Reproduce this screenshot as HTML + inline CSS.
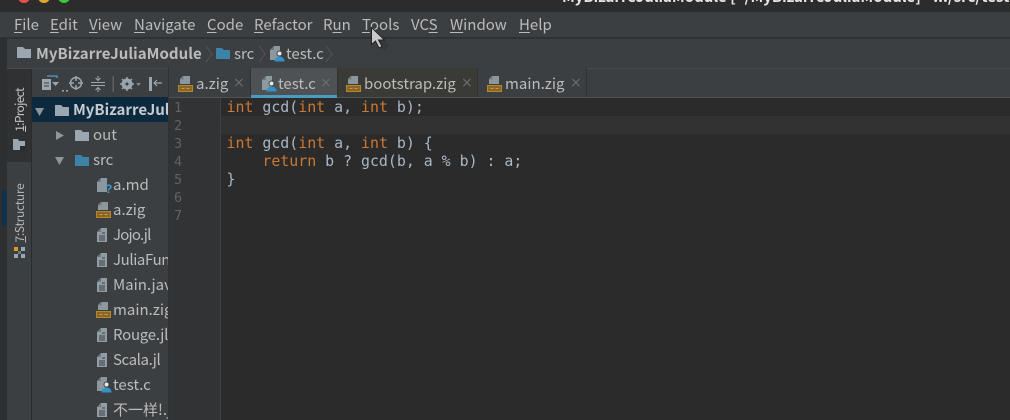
<!DOCTYPE html>
<html><head><meta charset="utf-8"><style>
html,body{margin:0;padding:0;background:#3c3f41}
#r{position:relative;width:1010px;height:420px;overflow:hidden;background:#3c3f41;font-family:"Noto Sans CJK SC","Liberation Sans",sans-serif;font-size:15px;color:#bbbbbb}
.a{position:absolute}
.t{position:absolute;white-space:pre;line-height:20px;height:20px}
.m u{text-decoration:underline;text-underline-offset:2px}
svg{position:absolute;overflow:visible}
.c{position:absolute;left:226.500px;white-space:pre;font:14.9px/18px "DejaVu Sans Mono","Liberation Mono",monospace;color:#a9b7c6}
.c b{font-weight:normal;color:#cc7832}
.n{position:absolute;left:174px;font:13.5px/18px "DejaVu Sans Mono",monospace;color:#606366}
.x{position:absolute;font:14px/20px "DejaVu Sans",sans-serif;color:#6a6d6f}
.tab{position:absolute;top:68px;height:29px}
</style></head><body><div id="r">
<svg width="0" height="0" style="position:absolute"><defs>
<g id="file"><path d="M4 0h6v14H0V4z" fill="#9aa7b0" opacity=".9"/><path d="M0 4l4-4v4z" fill="#6f787e"/><path d="M2 8h6M2 10h6M2 12h6M5 5h3" stroke="#3c3f41" stroke-width="1"/></g>
<g id="zig"><path d="M5 0H12V8H2V3z" fill="#9aa7b0" opacity=".85"/><path d="M2 3.500l3.500-3.500v3.500z" fill="#6f787e"/><rect x=".5" y="9.500" width="14" height="6" fill="#8a6823" stroke="#b5862e"/><path d="M3.500 12.500h3M8.500 12.500h3" stroke="#c39a45" stroke-width="1"/></g>
<g id="cf"><path d="M4 0h6v14H0V4z" fill="#9aa7b0" opacity=".85"/><path d="M0 4l4-4v4z" fill="#6f787e"/><circle cx="9.500" cy="7.500" r="2.500" fill="#e8e8e8" stroke="#3c3f41"/><path d="M4.500 15.500c0-3.500 2.500-5 5-5s5 1.500 5 5z" fill="#3592c4"/></g>
<path id="fold" d="M0 2h6l2 2h6v9H0z"/>
</defs></svg>

<!-- title bar -->
<div class="a" style="left:0;top:0;width:1010px;height:12px;background:#2c2c2c"></div>
<div class="a" style="left:18px;top:-9px;width:12px;height:12px;border-radius:50%;background:#e8504a"></div>
<div class="a" style="left:38px;top:-9px;width:12px;height:12px;border-radius:50%;background:#e3a52c"></div>
<div class="a" style="left:58px;top:-9px;width:12px;height:12px;border-radius:50%;background:#3fc63f"></div>
<div class="t" style="left:562px;top:-13px;font-weight:bold;font-size:15px;color:#e6e6e6">MyBizarreJuliaModule [~/MyBizarreJuliaModule] - .../src/test.c</div>

<!-- menu -->
<div class="a" style="left:0;top:37px;width:1010px;height:2px;background:#2f3133"></div>
<div class="t m" style="left:14px;top:15px"><u>F</u>ile</div>
<div class="t m" style="left:50px;top:15px"><u>E</u>dit</div>
<div class="t m" style="left:89px;top:15px"><u>V</u>iew</div>
<div class="t m" style="left:134px;top:15px"><u>N</u>avigate</div>
<div class="t m" style="left:207px;top:15px"><u>C</u>ode</div>
<div class="t m" style="left:254px;top:15px"><u>R</u>efactor</div>
<div class="t m" style="left:323px;top:15px">R<u>u</u>n</div>
<div class="t m" style="left:362px;top:15px"><u>T</u>ools</div>
<div class="t m" style="left:411px;top:15px">VC<u>S</u></div>
<div class="t m" style="left:450px;top:15px"><u>W</u>indow</div>
<div class="t m" style="left:519px;top:15px"><u>H</u>elp</div>

<!-- nav bar -->
<div class="a" style="left:0;top:68px;width:1010px;height:1px;background:#4a4a4a"></div>
<svg style="left:17px;top:45px" width="16" height="14"><use href="#fold" fill="#9aa7b0"/></svg>
<div class="t" style="left:36px;top:44px;font-weight:bold;letter-spacing:.05px">MyBizarreJuliaModule</div>
<svg style="left:205px;top:45px" width="8" height="18"><path d="M1 1l6 8-6 8" fill="none" stroke="#555"/></svg>
<svg style="left:216px;top:46px" width="16" height="14"><use href="#fold" fill="#3d83a8"/></svg>
<div class="t" style="left:234px;top:44px">src</div>
<svg style="left:258px;top:45px" width="8" height="18"><path d="M1 1l6 8-6 8" fill="none" stroke="#555"/></svg>
<svg style="left:270px;top:46px" width="16" height="16"><use href="#cf"/></svg>
<div class="t" style="left:286px;top:44px">test.c</div>
<svg style="left:325px;top:45px" width="8" height="18"><path d="M1 1l6 8-6 8" fill="none" stroke="#555"/></svg>

<!-- left strip -->
<div class="a" style="left:0;top:38px;width:7px;height:382px;background:#2d2f31"></div>
<div class="a" style="left:2px;top:190px;width:5px;height:36px;background:#123049"></div>
<div class="a" style="left:7px;top:69px;width:24px;height:351px;background:#3c3f41"></div>
<div class="a" style="left:7px;top:69px;width:24px;height:93px;background:#2f3133"></div>
<div class="a" style="left:31px;top:69px;width:1px;height:351px;background:#2b2b2b"></div>
<div class="t" style="left:-12px;top:100px;width:64px;text-align:center;transform:rotate(-90deg);font-size:12px;letter-spacing:-.7px;color:#c4c4c4"><u>1</u>:Project</div>
<svg style="left:13px;top:139px" width="12" height="12"><path d="M0 0h5l1 2h6v6H0z" fill="#9aa7b0"/><path d="M0 8h7v3H0z" fill="#9aa7b0"/><rect x="7" y="7" width="5" height="5" fill="#2b2b2b"/></svg>
<div class="t" style="left:-13px;top:203px;width:66px;text-align:center;transform:rotate(-90deg);font-size:12px;letter-spacing:-.3px;color:#b4b4b4"><u>7</u>:Structure</div>
<svg style="left:14px;top:247px" width="11" height="11"><rect x="0" y="0" width="4" height="4" fill="#e0972a"/><rect x="7" y="0" width="4" height="4" fill="#9aa7b0"/><rect x="0" y="7" width="4" height="4" fill="#9aa7b0"/><rect x="7" y="7" width="4" height="4" fill="#9aa7b0"/><rect x="4" y="4" width="3" height="3" fill="#6f7a80"/></svg>

<!-- project panel toolbar -->
<svg style="left:41px;top:75px" width="130" height="18">
<rect x="1" y="4" width="9" height="11" fill="#9aa7b0"/><path d="M3 8h5M3 11h5" stroke="#3c3f41"/><path d="M6 1h10v2" fill="none" stroke="#4a8fb4" stroke-width="1.500"/><path d="M11 7h7l-3.500 4z" fill="#9aa7b0"/>
<rect x="21" y="15" width="2" height="1.500" fill="#9aa7b0"/><rect x="25" y="15" width="2" height="1.500" fill="#9aa7b0"/>
<circle cx="35" cy="8" r="5.500" fill="none" stroke="#9aa7b0" stroke-width="1.500"/><path d="M35 1v5M35 10v5M28 8h5M37 8h5" stroke="#9aa7b0" stroke-width="1.500"/>
<path d="M50 7.500h14M50 10.500h14" stroke="#9aa7b0"/><path d="M57 1v4M54.500 3l2.500 2.500L59.500 3M57 17v-4M54.500 15l2.500-2.500 2.500 2.500" fill="none" stroke="#9aa7b0"/>
<rect x="71.500" y="1" width="1.500" height="16" fill="#5c6063"/>
<circle cx="86" cy="9" r="4" fill="none" stroke="#9aa7b0" stroke-width="3"/><path d="M86 2v14M79 9h14M81 4l10 10M91 4L81 14" stroke="#9aa7b0" stroke-width="1.500"/><circle cx="86" cy="9" r="1.500" fill="#3c3f41"/>
<path d="M95 8h5l-2.500 3z" fill="#7d8386"/>
<rect x="108" y="2" width="3" height="14" fill="#9aa7b0"/><path d="M121 8h-8M116 5l-3 3 3 3" fill="none" stroke="#9aa7b0" stroke-width="1.200"/>
</svg>
<div class="a" style="left:168px;top:69px;width:1px;height:351px;background:#2f3133"></div>

<!-- tree -->
<div class="a" style="left:32px;top:97px;width:136px;height:25px;background:#0d293e"></div>
<div id="tree" class="a" style="left:32px;top:97px;width:136px;height:323px;overflow:hidden">
<svg style="left:3px;top:11px" width="10" height="8"><path d="M0 0h9l-4.500 8z" fill="#8c9599"/></svg>
<svg style="left:23px;top:6px" width="16" height="14"><use href="#fold" fill="#9aa7b0"/></svg>
<div class="t" style="left:41px;top:3px;font-weight:bold;color:#c4ccd2">MyBizarreJuliaModule</div>
<svg style="left:24px;top:34px" width="8" height="10"><path d="M0 0l8 4.500L0 9z" fill="#8c9599"/></svg>
<svg style="left:43px;top:31px" width="16" height="14"><use href="#fold" fill="#9aa7b0"/></svg>
<div class="t" style="left:61px;top:28px">out</div>
<svg style="left:23px;top:60px" width="10" height="8"><path d="M0 0h9l-4.500 8z" fill="#8c9599"/></svg>
<svg style="left:43px;top:56px" width="16" height="14"><use href="#fold" fill="#3d83a8"/></svg>
<div class="t" style="left:61px;top:53px">src</div>

<svg style="left:65px;top:81px" width="15" height="16"><path d="M4 0h6v14H0V4z" fill="#9aa7b0" opacity=".85"/><path d="M0 4l4-4v4z" fill="#6f787e"/><text x="8" y="15" font-family="Liberation Sans" font-size="12" font-weight="bold" fill="#3aa0cf">?</text></svg>
<div class="t" style="left:81px;top:78px">a.md</div>
<svg style="left:64px;top:105px" width="15" height="16"><use href="#zig"/></svg>
<div class="t" style="left:81px;top:103px">a.zig</div>
<svg style="left:65px;top:131px" width="11" height="15"><use href="#file"/></svg>
<div class="t" style="left:81px;top:128px;letter-spacing:-.8px">Jojo.jl</div>
<svg style="left:65px;top:156px" width="11" height="15"><use href="#file"/></svg>
<div class="t" style="left:81px;top:153px;letter-spacing:-.4px">JuliaFunctions.jl</div>
<svg style="left:65px;top:181px" width="11" height="15"><use href="#file"/></svg>
<div class="t" style="left:81px;top:178px">Main.java</div>
<svg style="left:64px;top:205px" width="15" height="16"><use href="#zig"/></svg>
<div class="t" style="left:81px;top:203px">main.zig</div>
<svg style="left:65px;top:231px" width="11" height="15"><use href="#file"/></svg>
<div class="t" style="left:81px;top:228px;letter-spacing:-.25px">Rouge.jl</div>
<svg style="left:65px;top:256px" width="11" height="15"><use href="#file"/></svg>
<div class="t" style="left:81px;top:253px;letter-spacing:-.4px">Scala.jl</div>
<svg style="left:65px;top:280px" width="15" height="16"><use href="#cf"/></svg>
<div class="t" style="left:81px;top:278px">test.c</div>
<svg style="left:65px;top:306px" width="11" height="15"><use href="#file"/></svg>
<div class="t" style="left:81px;top:303px">不一样!.jl</div>
</div>

<!-- tabs -->
<div class="a" style="left:169px;top:68px;width:841px;height:1px;background:#4a4a4a"></div>
<div class="a" style="left:169px;top:97px;width:841px;height:1px;background:#505355"></div>
<div class="tab" style="left:169px;width:81px;background:#3c3f41"></div>
<div class="tab" style="left:251px;width:86px;background:#4e5254"></div>
<div class="a" style="left:251px;top:95px;width:86px;height:3px;background:#4a9bc0"></div>
<div class="tab" style="left:338px;width:139px;background:#3a3a36"></div>
<div class="tab" style="left:478px;width:108px;background:#3c3f41"></div>
<div class="a" style="left:168px;top:68px;width:1px;height:29px;background:#2f3133"></div>
<div class="a" style="left:250px;top:68px;width:1px;height:29px;background:#323232"></div>
<div class="a" style="left:337px;top:68px;width:1px;height:29px;background:#323232"></div>
<div class="a" style="left:477px;top:68px;width:1px;height:29px;background:#323232"></div>
<div class="a" style="left:586px;top:68px;width:1px;height:29px;background:#323232"></div>
<svg style="left:178px;top:76px" width="15" height="16"><use href="#zig"/></svg>
<div class="t" style="left:196px;top:74px">a.zig</div><div class="x" style="left:233px;top:73px">×</div>
<svg style="left:262px;top:76px" width="15" height="16"><use href="#cf"/></svg>
<div class="t" style="left:278px;top:74px">test.c</div><div class="x" style="left:320px;top:73px">×</div>
<svg style="left:346px;top:76px" width="15" height="16"><use href="#zig"/></svg>
<div class="t" style="left:364px;top:74px">bootstrap.zig</div><div class="x" style="left:461px;top:73px">×</div>
<svg style="left:487px;top:76px" width="15" height="16"><use href="#zig"/></svg>
<div class="t" style="left:505px;top:74px">main.zig</div><div class="x" style="left:570px;top:73px">×</div>

<!-- gutter + editor -->
<div class="a" style="left:169px;top:98px;width:52px;height:322px;background:#313335"></div>
<div class="a" style="left:220px;top:98px;width:1px;height:322px;background:#3f4244"></div>
<div class="a" style="left:221px;top:98px;width:789px;height:322px;background:#2b2b2b"></div>
<div class="a" style="left:221px;top:116px;width:789px;height:18px;background:#323232"></div>
<div class="n" style="top:99px">1</div><div class="n" style="top:117px">2</div><div class="n" style="top:135px">3</div><div class="n" style="top:153px">4</div><div class="n" style="top:171px">5</div><div class="n" style="top:189px">6</div><div class="n" style="top:207px">7</div>
<div class="c" style="top:98px"><b>int</b> gcd(<b>int</b> a, <b>int</b> b);</div>
<div class="c" style="top:134px"><b>int</b> gcd(<b>int</b> a, <b>int</b> b) {</div>
<div class="c" style="top:152px">    <b>return</b> b ? gcd(b, a % b) : a;</div>
<div class="c" style="top:170px">}</div>

<!-- cursor -->
<svg style="left:371px;top:27px" width="20" height="26"><path d="M5 5l13 13-4 6-5-4z" fill="#222" opacity=".25"/><path d="M0.500 0.500V17.500l4-3.500 3.500 7 3-1.500-3.500-6.500h6z" fill="#c8c8c8" stroke="#222" stroke-width="1"/></svg>
</div></body></html>
